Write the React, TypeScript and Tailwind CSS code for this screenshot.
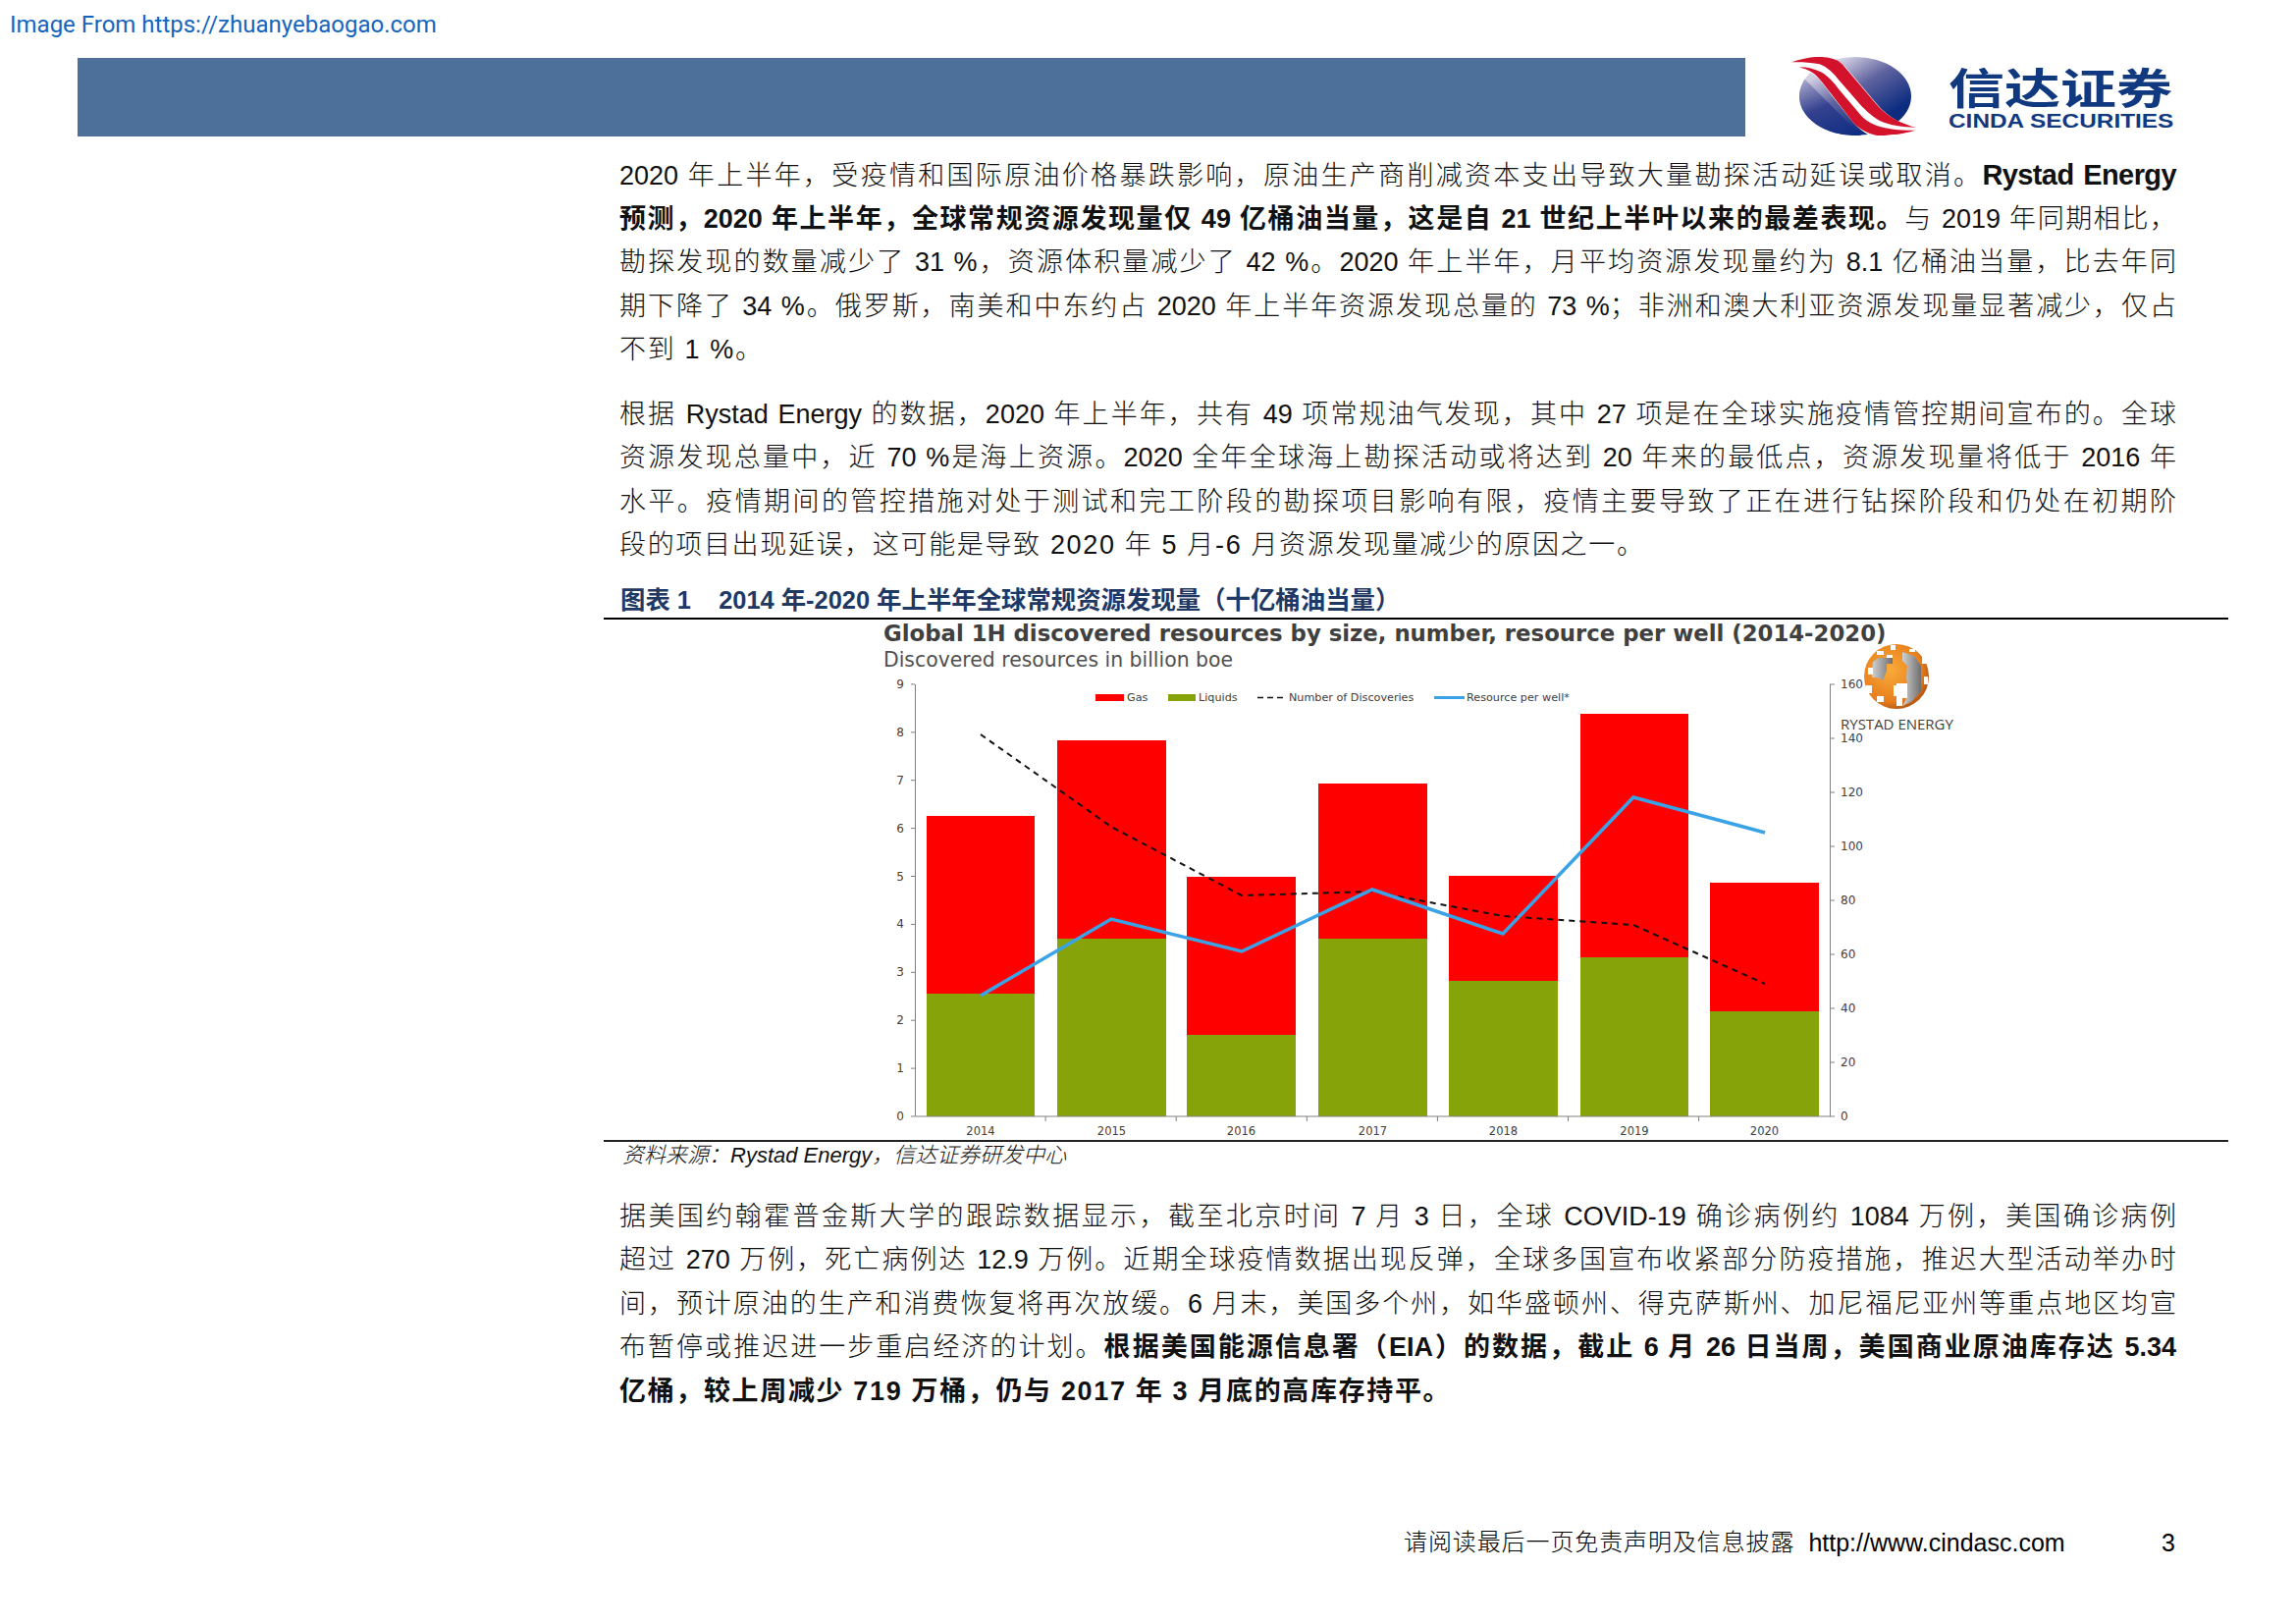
import React from 'react';

const bars = [
  { year: '2014', x: 944, w: 110, top: 830, split: 1011 },
  { year: '2015', x: 1077, w: 111, top: 753, split: 955 },
  { year: '2016', x: 1209, w: 111, top: 892, split: 1053 },
  { year: '2017', x: 1343, w: 111, top: 797, split: 955 },
  { year: '2018', x: 1476, w: 111, top: 891, split: 998 },
  { year: '2019', x: 1610, w: 110, top: 726, split: 974 },
  { year: '2020', x: 1742, w: 111, top: 898, split: 1029 },
];

const discoveries = '999,747 1132,841 1265,911 1398,907 1531,932 1664,941 1798,1001';
const perWell = '999,1013 1132,935 1265,968 1398,905 1531,950 1664,811 1798,847';

function Line({ children, last }: { children: React.ReactNode; last?: boolean }) {
  return (
    <p className={last ? 'h-[44.5px] leading-[44.5px] whitespace-nowrap tracking-[1.65px]' : 'h-[44.5px] leading-[44.5px] whitespace-nowrap text-justify [text-align-last:justify]'}>
      {children}
    </p>
  );
}

function CindaLogo() {
  return (
    <svg width="132" height="82" viewBox="-2 0 132 82" className="shrink-0">
      <defs>
        <linearGradient id="cindaUpper" x1="0.42" y1="0" x2="0.95" y2="0.6">
          <stop offset="0" stopColor="#d2cfe2" />
          <stop offset="0.45" stopColor="#5f639f" />
          <stop offset="1" stopColor="#0c2c80" />
        </linearGradient>
        <linearGradient id="cindaLower" x1="0.1" y1="0.25" x2="0.55" y2="1">
          <stop offset="0" stopColor="#a9a8cb" />
          <stop offset="0.45" stopColor="#34418f" />
          <stop offset="1" stopColor="#0c2c80" />
        </linearGradient>
        <clipPath id="cindaLowerClip">
          <path d="M0 10 L70 80 L0 82 Z" />
        </clipPath>
      </defs>
      <ellipse cx="64" cy="40" rx="57" ry="40" fill="url(#cindaUpper)" />
      <ellipse cx="64" cy="40" rx="57" ry="40" fill="url(#cindaLower)" clipPath="url(#cindaLowerClip)" />
      <path d="M-1 5 C12 1 24 -1 32 0 C42 1 48 4 54 10 L86 48 C98 62 112 69 128 73 L128 75 C112 78 100 82 86 81 C76 81 68 73 62 67 L39 38 C32 28 26 20 20 17 C12 12 4 8 -1 5 Z" fill="#fff" />
      <path d="M-1 5.3 C12 1 24 -1 32 0.3 C42 1 48 4 52 8.7 L86 48.7 C98 62 112 68 126 72 C112 71 100 70 89 65 C80 60 72 52 66 45 L46 22 C40 14 32 8 26 7 C16 5 6 5 -1 5.3 Z" fill="#d3122b" />
      <path d="M6 10.3 C14 10 22 12 29 15.3 C36 19 42 26 49 35 L66 55 C72 63 78 67 86 70 C98 74 112 75 126 74.7 C116 77 110 79 102 79 C96 80 92 80 86 80 C76 78 68 73 62 67 L39 37 C32 28 28 22 22 17 C16 13 10 11 6 10.3 Z" fill="#d3122b" />
    </svg>
  );
}

function RystadGlobe() {
  return (
    <g>
      <defs>
        <radialGradient id="globeFill" cx="0.4" cy="0.4" r="0.7">
          <stop offset="0" stopColor="#f9ab3a" />
          <stop offset="0.7" stopColor="#e87e1c" />
          <stop offset="1" stopColor="#9c430f" />
        </radialGradient>
        <linearGradient id="globeGray" x1="0" y1="0" x2="1" y2="0">
          <stop offset="0" stopColor="#d0d0d0" />
          <stop offset="1" stopColor="#6f6f6f" />
        </linearGradient>
      </defs>
      <circle cx="1932" cy="688" r="33" fill="url(#globeFill)" />
      <path d="M1908 673 L1914 669 H1928 V675 H1922 V682 L1918 692 L1912 689 H1907 Z" fill="url(#globeGray)" />
      <path d="M1938 663 L1950 667 L1957 677 V703 L1948 713 L1938 718 L1943 708 V695 L1942 690 L1943 677 L1938 672 Z" fill="url(#globeGray)" />
      <path d="M1932 695 H1943 V710 H1938 V718 H1932 V708 H1929 V697 H1932 Z" fill="#fff" />
      <path d="M1903 679 h5 v7 h-5 z M1901 697 h6 v8 h-6 z M1912 708 h7 v6 h-7 z M1926 656 h5 v5 h-5 z M1958 668 h5 v7 h-5 z M1912 662 h7 v4 h-7 z M1922 666 h6 v3 h-6 z M1945 660 h6 v3 h-6 z M1960 688 h4 v8 h-4 z" fill="#fff" />
    </g>
  );
}

function DiscoveryChart() {
  return (
    <svg width="1655" height="530" viewBox="615 630 1655 530" className="block font-normal">
      <text x="900" y="652" fontFamily="DejaVu Sans" fontWeight="700" fontSize="22.8" fill="#404040">
        Global 1H discovered resources by size, number, resource per well (2014-2020)
      </text>
      <text x="900" y="678" fontFamily="DejaVu Sans" fontSize="20.4" fill="#505050">
        Discovered resources in billion boe
      </text>

      {bars.map((b) => (
        <g key={b.year}>
          <rect x={b.x} y={b.top} width={b.w} height={b.split - b.top} fill="#ff0000" />
          <rect x={b.x} y={b.split} width={b.w} height={1136 - b.split} fill="#86a40a" />
          <text x={b.x + b.w / 2} y="1155" textAnchor="middle" fontFamily="DejaVu Sans" fontSize="11.5" fill="#404040">
            {b.year}
          </text>
        </g>
      ))}

      <g stroke="#808080" strokeWidth="1" fill="none">
        <path d="M932.5 696 V1136 H1864.5 V696" />
        {[0, 1, 2, 3, 4, 5, 6, 7, 8, 9].map((n) => (
          <path key={n} d={`M928 ${1136 - n * 48.9} H932`} />
        ))}
        {[0, 1, 2, 3, 4, 5, 6, 7, 8].map((n) => (
          <path key={n} d={`M1864 ${1136 - n * 55} H1869`} />
        ))}
        {[1, 2, 3, 4, 5, 6].map((n) => (
          <path key={n} d={`M${932 + n * 133.1} 1136 V1141`} />
        ))}
      </g>

      {[0, 1, 2, 3, 4, 5, 6, 7, 8, 9].map((n) => (
        <text key={n} x="921" y={1140 - n * 48.9} textAnchor="end" fontFamily="DejaVu Sans" fontSize="12" fill="#404040">
          {n}
        </text>
      ))}
      {[0, 20, 40, 60, 80, 100, 120, 140, 160].map((n, i) => (
        <text key={n} x="1875" y={1140 - i * 55} fontFamily="DejaVu Sans" fontSize="12" fill="#404040">
          {n}
        </text>
      ))}

      <polyline points={discoveries} fill="none" stroke="#111" strokeWidth="2" strokeDasharray="6 5" />
      <polyline points={perWell} fill="none" stroke="#3aa3e8" strokeWidth="3.5" />

      <g fontFamily="DejaVu Sans" fontSize="11.2" fill="#404040">
        <rect x="1116" y="706" width="29" height="7" fill="#ff0000" />
        <text x="1148" y="713">Gas</text>
        <rect x="1190" y="706" width="28" height="7" fill="#86a40a" />
        <text x="1221" y="713">Liquids</text>
        <path d="M1281 709.5 H1311" stroke="#111" strokeWidth="1.5" strokeDasharray="6 4" />
        <text x="1313" y="713">Number of Discoveries</text>
        <path d="M1461 709.5 H1492" stroke="#3aa3e8" strokeWidth="3" />
        <text x="1494" y="713">Resource per well*</text>
      </g>

      <RystadGlobe />
      <text x="1875" y="742" fontFamily="Open Sans" fontSize="15" fill="#404040">
        RYSTAD ENERGY
      </text>
    </svg>
  );
}

export default function App() {
  return (
    <div
      className="w-[2339px] h-[1654px] bg-white text-black overflow-hidden"
      style={{ fontFamily: '"Liberation Sans", "Noto Sans CJK SC", sans-serif' }}
    >
      {/* Watermark line */}
      <div className="h-[59px] pl-[10px] pt-[10px]">
        <span className="text-[#1565c0] text-[24px] leading-[30px] font-['Roboto']">Image From https://zhuanyebaogao.com</span>
      </div>

      {/* Header band + logo */}
      <div className="flex items-start pl-[79px] h-[80px]">
        <div className="w-[1699px] h-[80px] bg-[#4c7099]" />
        <div className="ml-[46px] -mt-[1px]">
          <CindaLogo />
        </div>
        <div className="ml-[29px] mt-[4px] flex flex-col w-[232px] text-[#10397f]">
          <div className="text-[57px] leading-[48px] h-[50px] font-bold whitespace-nowrap scale-y-[0.75] font-['Noto_Sans_CJK_SC']">信达证券</div>
          <div className="text-[19.5px] leading-[20px] font-bold whitespace-nowrap origin-left scale-x-[1.25]">CINDA SECURITIES</div>
        </div>
      </div>

      {/* Article */}
      <main className="ml-[631px] w-[1586px] pt-[17px] text-[27px] font-light text-[#111]">
        <Line>
          2020 年上半年，受疫情和国际原油价格暴跌影响，原油生产商削减资本支出导致大量勘探活动延误或取消。<b className="font-bold text-[29px] tracking-[-0.6px]">Rystad Energy</b>
        </Line>
        <Line>
          <b className="font-bold">预测，2020 年上半年，全球常规资源发现量仅 49 亿桶油当量，这是自 21 世纪上半叶以来的最差表现。</b>与 2019 年同期相比，
        </Line>
        <Line>勘探发现的数量减少了 31 %，资源体积量减少了 42 %。2020 年上半年，月平均资源发现量约为 8.1 亿桶油当量，比去年同</Line>
        <Line>期下降了 34 %。俄罗斯，南美和中东约占 2020 年上半年资源发现总量的 73 %；非洲和澳大利亚资源发现量显著减少，仅占</Line>
        <Line last>不到 1 %。</Line>

        <div className="mt-[21px]">
          <Line>根据 Rystad Energy 的数据，2020 年上半年，共有 49 项常规油气发现，其中 27 项是在全球实施疫情管控期间宣布的。全球</Line>
          <Line>资源发现总量中，近 70 %是海上资源。2020 全年全球海上勘探活动或将达到 20 年来的最低点，资源发现量将低于 2016 年</Line>
          <Line>水平。疫情期间的管控措施对处于测试和完工阶段的勘探项目影响有限，疫情主要导致了正在进行钻探阶段和仍处在初期阶</Line>
          <Line last>段的项目出现延误，这可能是导致 2020 年 5 月-6 月资源发现量减少的原因之一。</Line>
        </div>

        {/* Figure */}
        <figure className="-ml-[16px] w-[1655px] mt-[14px]">
          <figcaption className="pl-[17px] h-[39px] leading-[38px] text-[25.4px] font-bold text-[#1f3864] whitespace-nowrap border-b-2 border-black">
            图表 1&nbsp;&nbsp;&nbsp;&nbsp;2014 年-2020 年上半年全球常规资源发现量（十亿桶油当量）
          </figcaption>
          <div className="border-b-2 border-[#222]">
            <DiscoveryChart />
          </div>
          <p className="pl-[19px] h-[27px] leading-[27px] text-[22px] italic whitespace-nowrap">
            资料来源：Rystad Energy，信达证券研发中心
          </p>
        </figure>

        <div className="mt-[27px]">
          <Line>据美国约翰霍普金斯大学的跟踪数据显示，截至北京时间 7 月 3 日，全球 COVID-19 确诊病例约 1084 万例，美国确诊病例</Line>
          <Line>超过 270 万例，死亡病例达 12.9 万例。近期全球疫情数据出现反弹，全球多国宣布收紧部分防疫措施，推迟大型活动举办时</Line>
          <Line>间，预计原油的生产和消费恢复将再次放缓。6 月末，美国多个州，如华盛顿州、得克萨斯州、加尼福尼亚州等重点地区均宣</Line>
          <Line>
            布暂停或推迟进一步重启经济的计划。<b className="font-bold">根据美国能源信息署（EIA）的数据，截止 6 月 26 日当周，美国商业原油库存达 5.34</b>
          </Line>
          <Line last>
            <b className="font-bold">亿桶，较上周减少 719 万桶，仍与 2017 年 3 月底的高库存持平。</b>
          </Line>
        </div>
      </main>

      {/* Footer */}
      <footer className="mt-[117px] ml-[1430px] w-[786px] flex items-center text-[24px] leading-[30px] whitespace-nowrap">
        <span className="tracking-[0.9px] font-light">请阅读最后一页免责声明及信息披露</span>
        <span className="ml-[14px] text-[25px]">http://www.cindasc.com</span>
        <span className="ml-auto text-[25px]">3</span>
      </footer>
    </div>
  );
}
